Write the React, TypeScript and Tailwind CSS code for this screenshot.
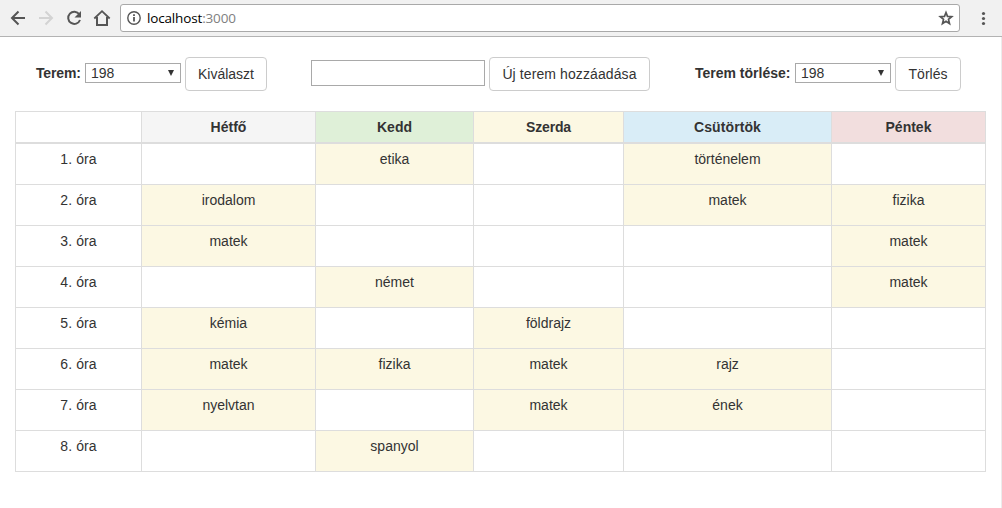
import type { ReactNode } from "react";

const days = [
  { name: "Hétfő", head: "w-[174px] bg-[#f5f5f5]" },
  { name: "Kedd", head: "w-[158px] bg-[#dff0d8]" },
  { name: "Szerda", head: "w-[150px] bg-[#fcf8e3] tracking-[-0.15px]" },
  { name: "Csütörtök", head: "w-[208px] bg-[#d9edf7] tracking-[0.1px]" },
  { name: "Péntek", head: "w-[154px] bg-[#f2dede]" },
];

const lessons = [
  ["", "etika", "", "történelem", ""],
  ["irodalom", "", "", "matek", "fizika"],
  ["matek", "", "", "", "matek"],
  ["", "német", "", "", "matek"],
  ["kémia", "", "földrajz", "", ""],
  ["matek", "fizika", "matek", "rajz", ""],
  ["nyelvtan", "", "matek", "ének", ""],
  ["", "spanyol", "", "", ""],
];

function BrowserBar() {
  return (
    <header className="flex h-[37px] items-start border-b border-[#b3b3b3] bg-[#f1f1f1]">
      <svg className="h-[36px] w-[120px] shrink-0" viewBox="0 0 120 36" fill="none" stroke="#555" strokeWidth="2">
        <path d="M25 18H12.5M18.5 11.5L12 18l6.5 6.5" />
        <path d="M39 18h12.500M45.500 11.500L52 18l-6.500 6.500" stroke="#d3d3d3" />
        <path d="M79.300 14.300A6.100 6.100 0 1 0 80 20" />
        <path d="M81 11v6.500h-6.500z" fill="#555" stroke="none" />
        <path d="M94.300 18.500L102 11.200l7.700 7.300" strokeWidth="1.800" />
        <path d="M97 17v8h10v-8" />
      </svg>
      <div className="mt-1 flex h-7 w-[840px] items-center rounded-[3px] border border-[#a9a9a9] bg-white pl-[6px] pr-[5px]">
        <svg className="size-[14px]" viewBox="0 0 14 14" fill="none" stroke="#555">
          <circle cx="7" cy="7" r="6.200" strokeWidth="1.400" />
          <path d="M7 6v4.500M7 3.200v1.700" strokeWidth="1.800" />
        </svg>
        <span className="ml-[6px] font-['Open_Sans','Noto_Sans',sans-serif] text-[13.500px] leading-5 tracking-[-0.16px] text-black">
          localhost<span className="text-[#808080]">:3000</span>
        </span>
        <svg className="ml-auto size-4" viewBox="0 0 16 16" fill="none" stroke="#555" strokeWidth="1.700">
          <path d="M8 2.500l1.500 3.900 4.200.3-3.200 2.700 1 4.100L8 11.200l-3.500 2.300 1-4.100-3.200-2.700 4.200-.3z" />
        </svg>
      </div>
      <svg className="ml-[21px] mt-[11px] h-[15px] w-[5px]" viewBox="0 0 5 15" fill="#555">
        <circle cx="2.500" cy="2.500" r="1.600" />
        <circle cx="2.500" cy="7.500" r="1.600" />
        <circle cx="2.500" cy="12.500" r="1.600" />
      </svg>
    </header>
  );
}

function Button({ className, children }: { className: string; children: ReactNode }) {
  return (
    <button className={`ml-1 h-[34px] shrink-0 whitespace-nowrap rounded-[4px] border border-[#ccc] bg-white text-center leading-5 ${className}`}>
      {children}
    </button>
  );
}

function RoomSelect() {
  return (
    <div className="mt-[6px] grid h-5 w-24 shrink-0 items-center border border-[#a9a9a9] bg-white">
      <select className="col-start-1 row-start-1 h-[18px] w-full appearance-none pl-[5px] leading-[18px]">
        <option>198</option>
      </select>
      <svg className="pointer-events-none col-start-1 row-start-1 mr-[6px] h-[6px] w-[6px] justify-self-end" viewBox="0 0 6 6">
        <path d="M0 0h6L3 6z" fill="#333" />
      </svg>
    </div>
  );
}

export default function App() {
  return (
    <div className="h-[508px] w-[1002px] overflow-hidden bg-white font-['Liberation_Sans',Arial,sans-serif] text-[14px] leading-5 text-[#333]">
      <BrowserBar />
      <main className="h-[471px] border-r border-[#ececec] pt-5">
        <div className="flex h-[54px] items-start">
          <label className="ml-[36px] mt-[6px] w-[49px] whitespace-nowrap font-bold tracking-[-0.15px]">Terem:</label>
          <RoomSelect />
          <Button className="w-[82px]">Kiválaszt</Button>
          <input className="ml-[44px] mt-[3px] h-[26px] w-[174px] border border-[#a9a9a9]" />
          <Button className="w-[161px] tracking-[0.1px]">Új terem hozzáadása</Button>
          <label className="ml-[45px] mt-[6px] w-[100px] whitespace-nowrap font-bold">Terem törlése:</label>
          <RoomSelect />
          <Button className="w-[66px]">Törlés</Button>
        </div>
        <table className="ml-[15px] w-[971px] table-fixed border-separate border-spacing-0 border-l border-t border-[#ddd] text-center">
          <thead>
            <tr className="h-8">
              <th className="w-[126px] border-b-2 border-r border-[#ddd] p-0" />
              {days.map((day) => (
                <th key={day.name} className={`border-b-2 border-r border-[#ddd] p-0 font-bold ${day.head}`}>
                  {day.name}
                </th>
              ))}
            </tr>
          </thead>
          <tbody>
            {lessons.map((row, i) => (
              <tr key={i} className="h-[41px]">
                <td className="border-b border-r border-[#ddd] px-0 pb-0 pt-[5px] align-top tracking-[0.1px]">{i + 1}. óra</td>
                {row.map((subject, j) => (
                  <td
                    key={j}
                    className={`border-b border-r border-[#ddd] px-0 pb-0 pt-[5px] align-top ${subject ? "bg-[#fcf8e3]" : ""}`}
                  >
                    {subject}
                  </td>
                ))}
              </tr>
            ))}
          </tbody>
        </table>
      </main>
    </div>
  );
}
